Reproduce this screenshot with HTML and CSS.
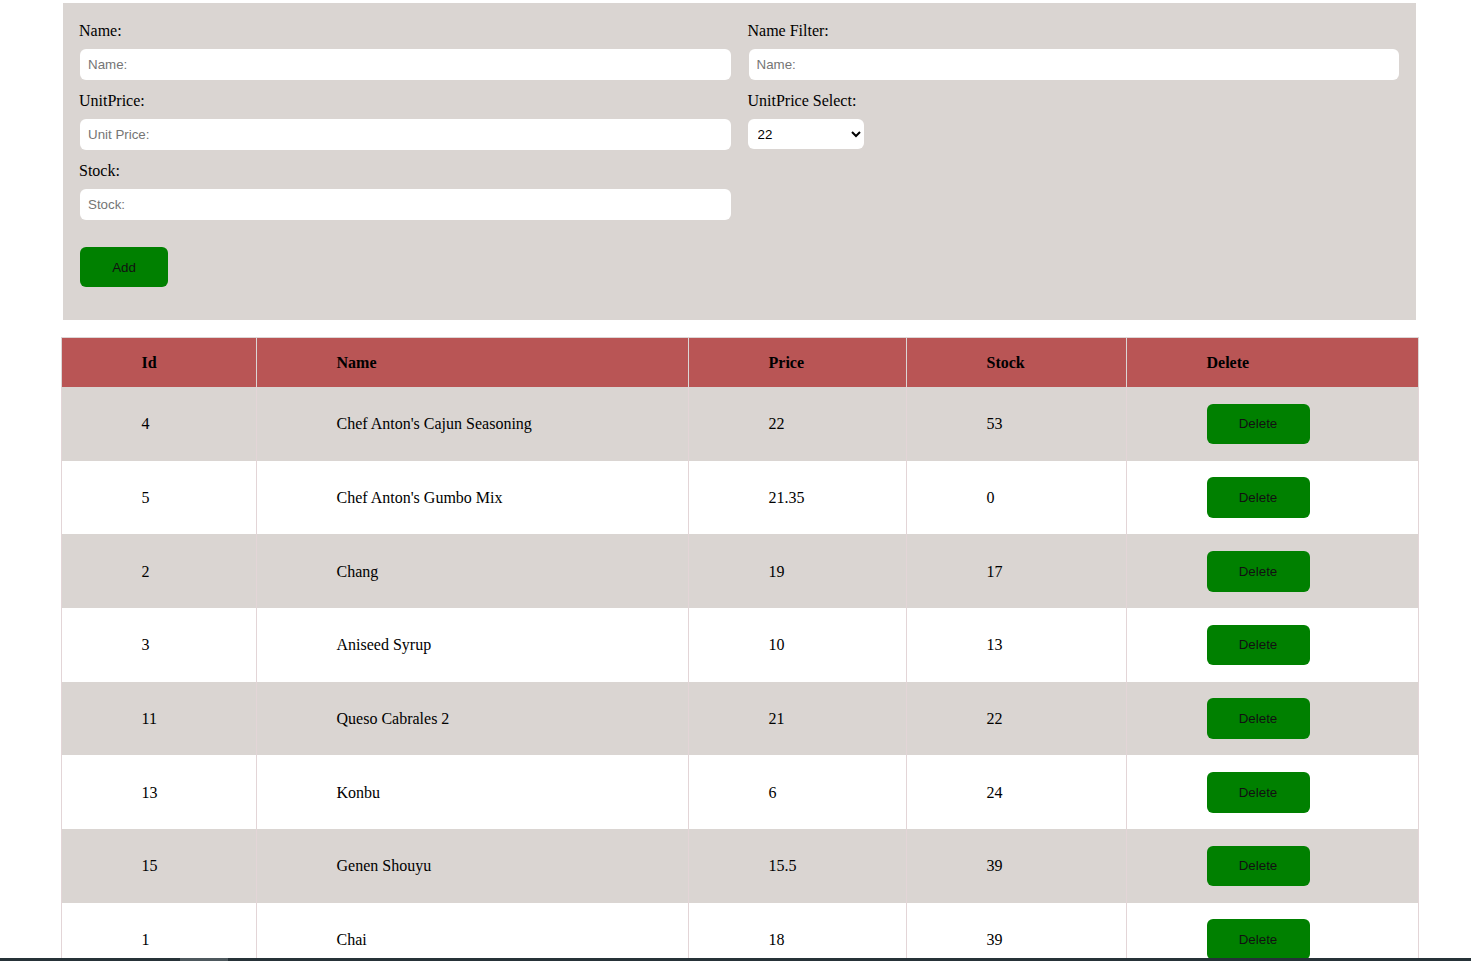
FILE: index.html
```html
<!DOCTYPE html>
<html lang="en">
<head>
<meta charset="utf-8">
<title>Products</title>
<link rel="stylesheet" href="styles.css">
</head>
<body>
<div class="panel">
  <div class="col">
    <div class="field">
      <label class="lbl">Name:</label>
      <input class="inp" type="text" placeholder="Name:">
    </div>
    <div class="field">
      <label class="lbl">UnitPrice:</label>
      <input class="inp" type="text" placeholder="Unit Price:">
    </div>
    <div class="field">
      <label class="lbl">Stock:</label>
      <input class="inp" type="text" placeholder="Stock:">
    </div>
    <button class="btn add">Add</button>
  </div>
  <div class="col">
    <div class="field">
      <label class="lbl">Name Filter:</label>
      <input class="inp" type="text" placeholder="Name:">
    </div>
    <div class="field">
      <label class="lbl">UnitPrice Select:</label>
      <select class="sel">
        <option>22</option>
        <option>21.35</option>
        <option>19</option>
      </select>
    </div>
  </div>
</div>

<table class="grid">
  <colgroup>
    <col class="c1"><col class="c2"><col class="c3"><col class="c4"><col class="c5">
  </colgroup>
  <thead>
    <tr><th>Id</th><th>Name</th><th>Price</th><th>Stock</th><th>Delete</th></tr>
  </thead>
  <tbody>
    <tr><td>4</td><td>Chef Anton's Cajun Seasoning</td><td>22</td><td>53</td><td><button class="btn del">Delete</button></td></tr>
    <tr><td>5</td><td>Chef Anton's Gumbo Mix</td><td>21.35</td><td>0</td><td><button class="btn del">Delete</button></td></tr>
    <tr><td>2</td><td>Chang</td><td>19</td><td>17</td><td><button class="btn del">Delete</button></td></tr>
    <tr><td>3</td><td>Aniseed Syrup</td><td>10</td><td>13</td><td><button class="btn del">Delete</button></td></tr>
    <tr><td>11</td><td>Queso Cabrales 2</td><td>21</td><td>22</td><td><button class="btn del">Delete</button></td></tr>
    <tr><td>13</td><td>Konbu</td><td>6</td><td>24</td><td><button class="btn del">Delete</button></td></tr>
    <tr><td>15</td><td>Genen Shouyu</td><td>15.5</td><td>39</td><td><button class="btn del">Delete</button></td></tr>
    <tr><td>1</td><td>Chai</td><td>18</td><td>39</td><td><button class="btn del">Delete</button></td></tr>
  </tbody>
</table>

<div class="hbar"><div class="thumb"></div></div>
</body>
</html>
```
FILE: styles.css
```css
html {
  scrollbar-width: none;
}
html::-webkit-scrollbar {
  display: none;
}
body {
  margin: 0;
  font-family: "Liberation Serif", "Times New Roman", serif;
  font-size: 16px;
  color: #000;
  background: #fff;
}
.panel {
  margin: 3px 0 0 63px;
  width: 1353px;
  box-sizing: border-box;
  padding: 18px 17px 33px 16px;
  background: #dad5d2;
  display: grid;
  grid-template-columns: 1fr 1fr;
  column-gap: 17px;
}
.col {
  display: flex;
  flex-direction: column;
  align-items: flex-start;
}
.field {
  display: flex;
  flex-direction: column;
  align-items: flex-start;
  width: 100%;
  margin-bottom: 11px;
}
.lbl {
  display: block;
  line-height: 20px;
  height: 18px;
  margin-bottom: 10px;
}
.inp {
  box-sizing: border-box;
  width: calc(100% - 1px);
  margin-left: 1px;
  height: 31px;
  border: none;
  border-radius: 6px;
  background: #fff;
  padding: 0 8px;
  font-family: "Liberation Sans", Arial, sans-serif;
  font-size: 13.33px;
  color: #000;
  outline: none;
}
.inp::placeholder {
  color: #757575;
}
.sel {
  box-sizing: border-box;
  width: 116px;
  height: 30px;
  border: none;
  border-radius: 6px;
  background: #fff;
  padding: 0 4px 0 6px;
  font-family: "Liberation Sans", Arial, sans-serif;
  font-size: 13.33px;
  color: #000;
}
.btn {
  border: none;
  background: #008000;
  color: #111;
  border-radius: 6px;
  font-family: "Liberation Sans", Arial, sans-serif;
  font-size: 13.33px;
  cursor: pointer;
  padding: 0;
}
.add {
  margin-left: 1px;
  margin-top: 16px;
  width: 88px;
  height: 40px;
}
.grid {
  margin: 17px 0 0 60.5px;
  width: 1357px;
  table-layout: fixed;
  border-collapse: collapse;
}
.c1 { width: 195px; }
.c2 { width: 432px; }
.c3 { width: 218px; }
.c4 { width: 220px; }
.c5 { width: 292px; }
.grid th {
  background: #b95555;
  text-align: left;
  font-weight: bold;
  padding: 15px 10px 15px 80px;
  height: 19px;
  line-height: 19px;
  border: 1px solid #dcd6d6;
  border-bottom: none;
}
.grid td {
  text-align: left;
  padding: 16.5px 10px 16.5px 80px;
  line-height: 19px;
  border-left: 1px solid #e3d5d7;
  border-right: 1px solid #e3d5d7;
  vertical-align: middle;
}
.grid tbody tr:nth-child(odd) td {
  background: #dad5d2;
}
.grid tbody tr:nth-child(even) td {
  background: #fff;
}
.del {
  display: block;
  width: 103px;
  height: 40.7px;
}
.hbar {
  position: fixed;
  left: 0;
  right: 0;
  bottom: 0;
  height: 3px;
  background: #263238;
}
.thumb {
  position: absolute;
  left: 180px;
  top: 0;
  width: 48px;
  height: 3px;
  background: #4d585d;
}
```
